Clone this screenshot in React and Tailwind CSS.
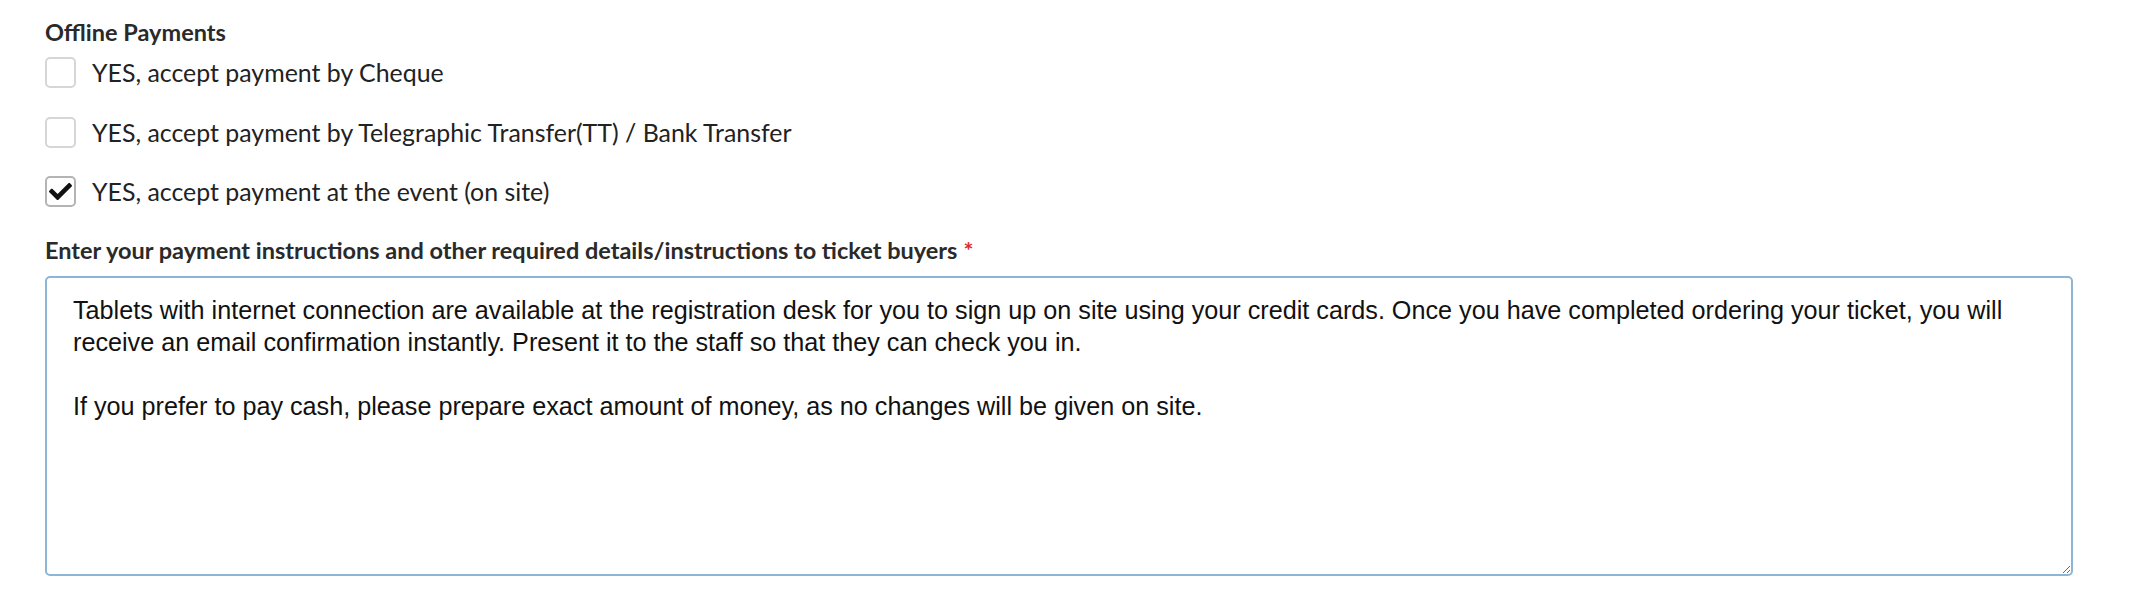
import React from "react";
import { FaCheck } from "react-icons/fa";

const options = [
  { label: "YES, accept payment by Cheque", checked: false },
  { label: "YES, accept payment by Telegraphic Transfer(TT) / Bank Transfer", checked: false },
  { label: "YES, accept payment at the event (on site)", checked: true },
];

const instructions =
  "Tablets with internet connection are available at the registration desk for you to sign up on site using your credit cards. Once you have completed ordering your ticket, you will receive an email confirmation instantly. Present it to the staff so that they can check you in.\n\nIf you prefer to pay cash, please prepare exact amount of money, as no changes will be given on site.";

function Box({ checked }) {
  return (
    <span
      className={
        "flex h-[31px] w-[31px] shrink-0 items-center justify-center rounded-[5px] border-2 bg-white " +
        (checked ? "border-[#b4b4b4]" : "border-[#d6d6d6]")
      }
    >
      {checked ? <FaCheck className="h-[23px] w-[23px] text-[#111]" /> : null}
    </span>
  );
}

export default function App() {
  return (
    <div
      className="min-h-[612px] bg-white pl-[45px] pr-[73px] pt-[19px]"
      style={{ fontFamily: "Lato, 'Open Sans', sans-serif" }}
    >
      <h3 className="text-[23.5px] font-bold leading-[26px] text-[#2a2a2a]">Offline Payments</h3>
      <div className="mt-[12px] flex flex-col gap-[28.5px]">
        {options.map((o) => (
          <label key={o.label} className="flex h-[31px] items-center gap-[16px]">
            <Box checked={o.checked} />
            <span className="text-[24.9px] leading-[31px] text-[#222]">{o.label}</span>
          </label>
        ))}
      </div>
      <div className="mt-[30px] text-[23.5px] font-bold leading-[26px] text-[#2a2a2a]">
        Enter your payment instructions and other required details/instructions to ticket buyers
        <span className="ml-[6px] text-[#d9302c]">*</span>
      </div>
      <textarea
        className="mt-[13px] block h-[300px] w-full rounded-[5px] border-2 border-[#8db5d5] bg-white pl-[26px] pr-[26px] pt-[16px] text-[25.2px] leading-[32px] text-[#111] outline-none"
        style={{ fontFamily: "'Liberation Sans', Arial, sans-serif" }}
        defaultValue={instructions}
      />
    </div>
  );
}
